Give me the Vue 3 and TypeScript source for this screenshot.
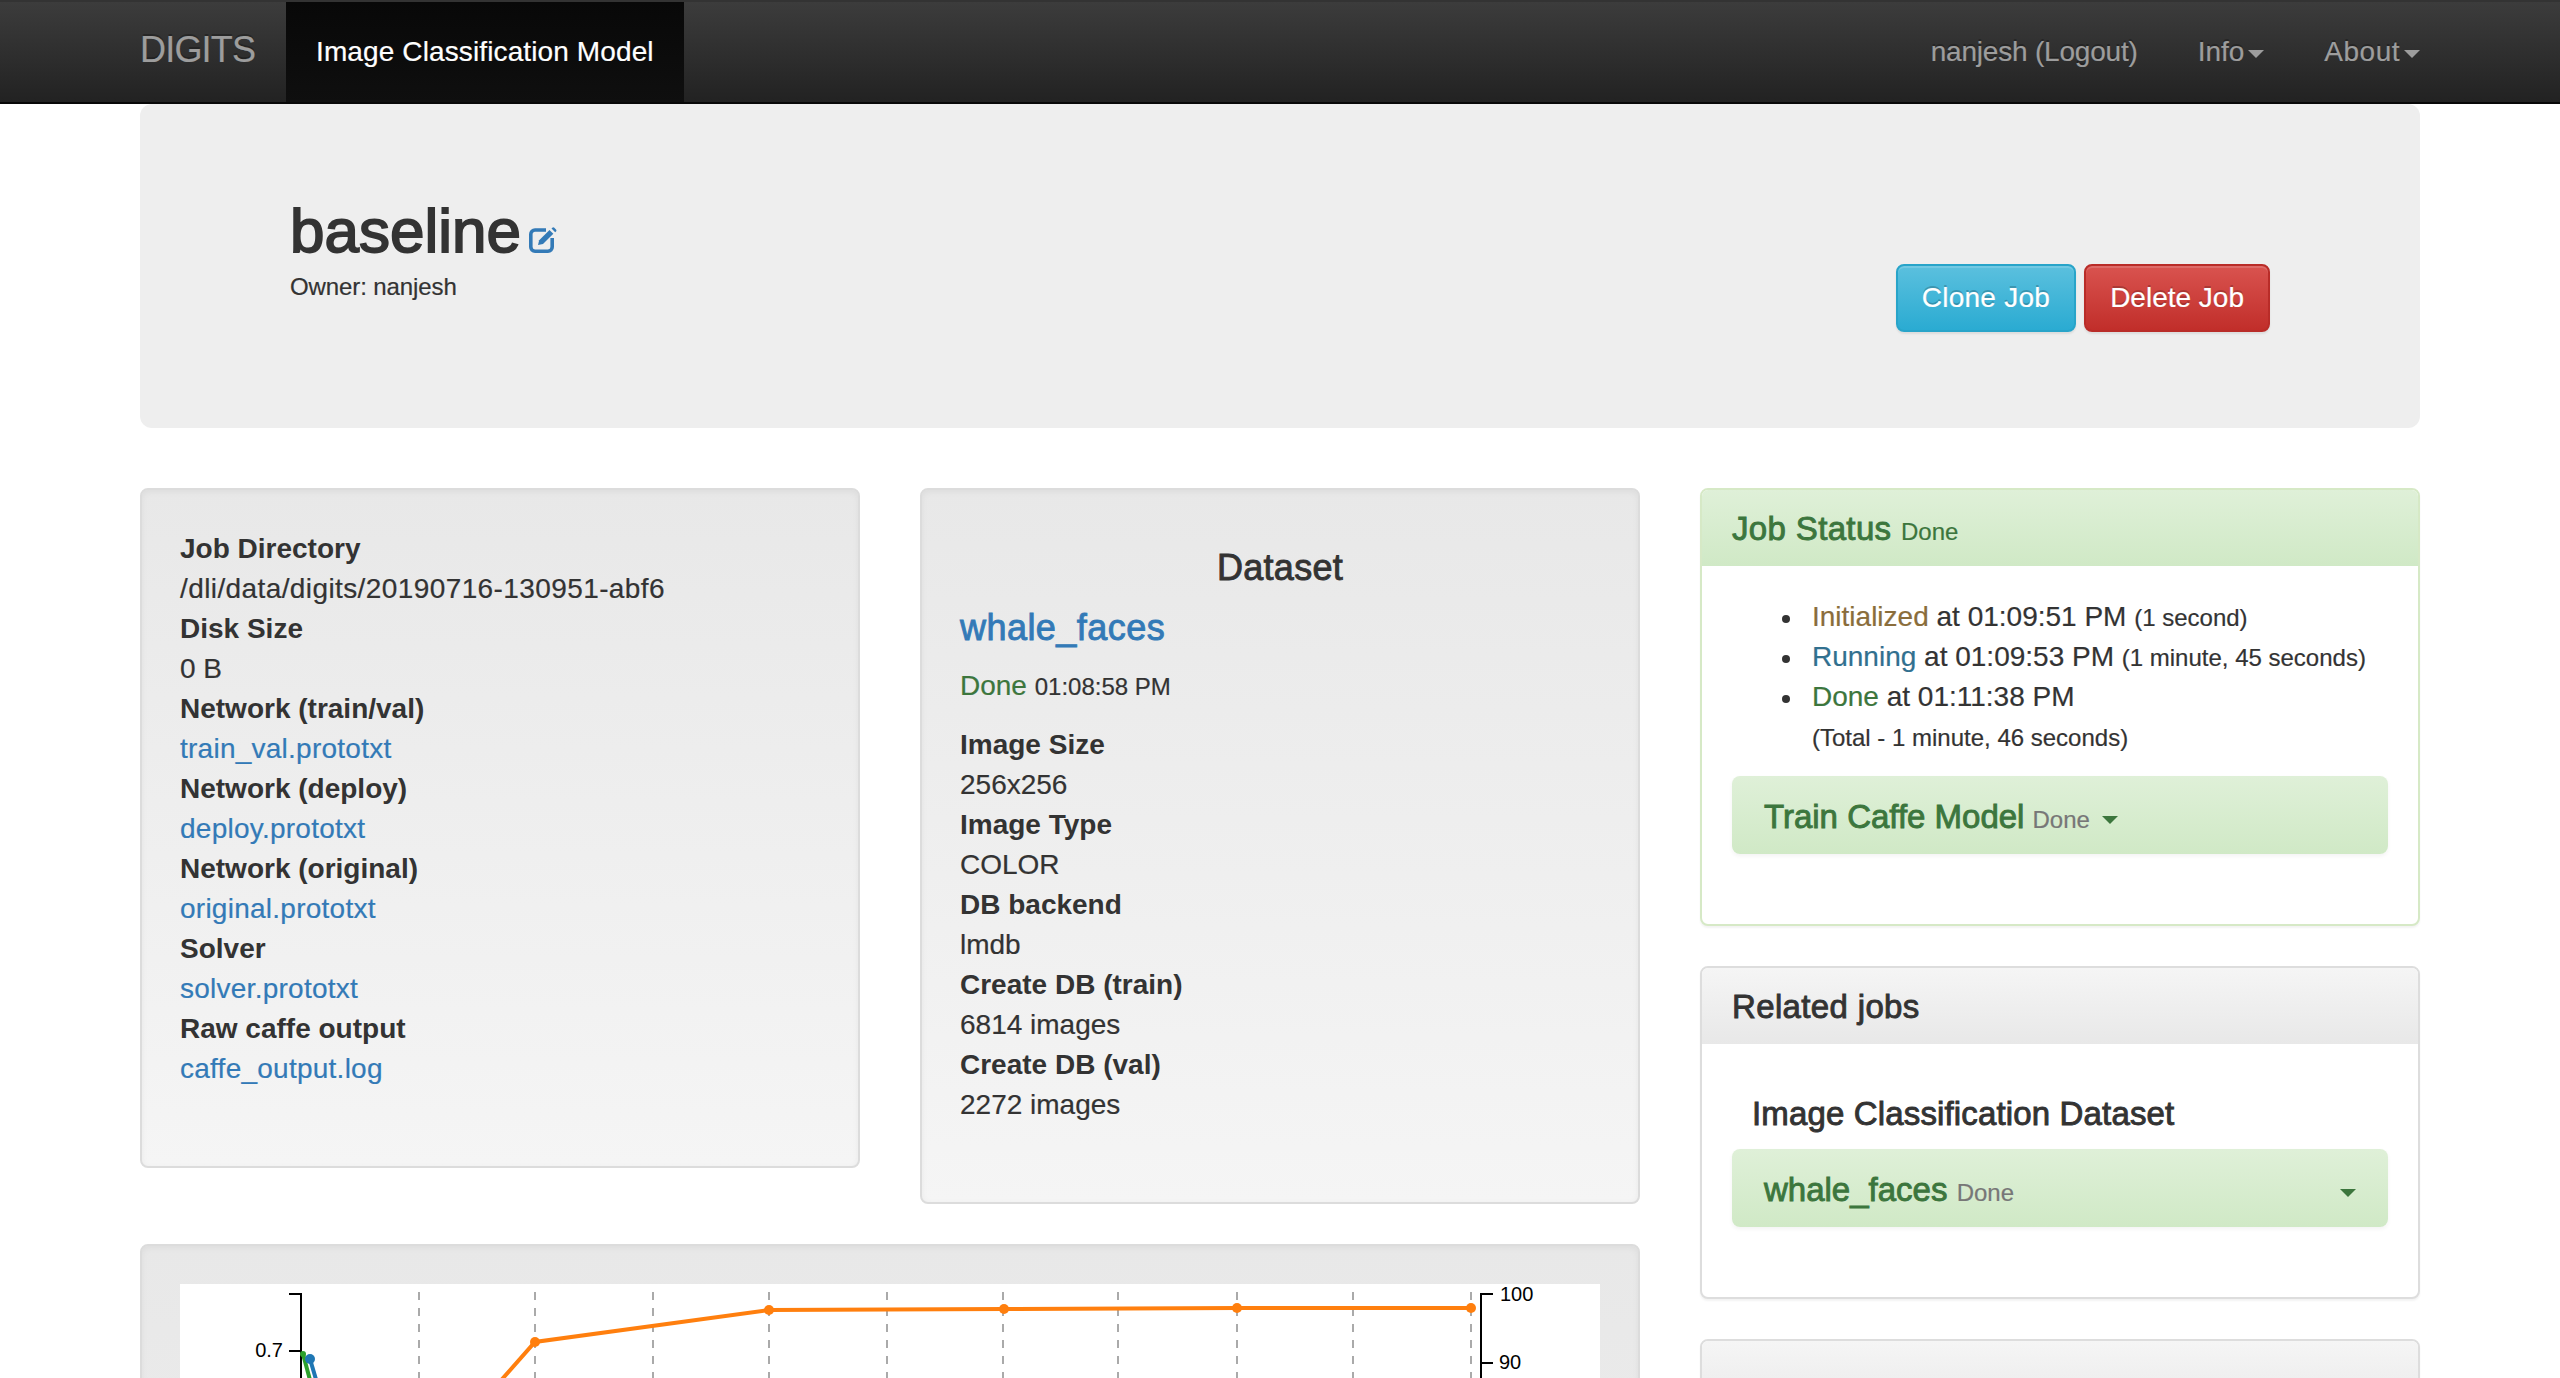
<script setup lang="ts">
interface Row { text: string; kind: 'label' | 'value' | 'link' | 'path' }

const jobRows: Row[] = [
  { text: 'Job Directory', kind: 'label' },
  { text: '/dli/data/digits/20190716-130951-abf6', kind: 'path' },
  { text: 'Disk Size', kind: 'label' },
  { text: '0 B', kind: 'value' },
  { text: 'Network (train/val)', kind: 'label' },
  { text: 'train_val.prototxt', kind: 'link' },
  { text: 'Network (deploy)', kind: 'label' },
  { text: 'deploy.prototxt', kind: 'link' },
  { text: 'Network (original)', kind: 'label' },
  { text: 'original.prototxt', kind: 'link' },
  { text: 'Solver', kind: 'label' },
  { text: 'solver.prototxt', kind: 'link' },
  { text: 'Raw caffe output', kind: 'label' },
  { text: 'caffe_output.log', kind: 'link' },
]

const datasetRows: Row[] = [
  { text: 'Image Size', kind: 'label' },
  { text: '256x256', kind: 'value' },
  { text: 'Image Type', kind: 'label' },
  { text: 'COLOR', kind: 'value' },
  { text: 'DB backend', kind: 'label' },
  { text: 'lmdb', kind: 'value' },
  { text: 'Create DB (train)', kind: 'label' },
  { text: '6814 images', kind: 'value' },
  { text: 'Create DB (val)', kind: 'label' },
  { text: '2272 images', kind: 'value' },
]

const statusRows = [
  { name: 'Initialized', cls: 'st-init', at: '01:09:51 PM', took: '(1 second)' },
  { name: 'Running', cls: 'st-run', at: '01:09:53 PM', took: '(1 minute, 45 seconds)' },
  { name: 'Done', cls: 'st-done', at: '01:11:38 PM', took: '' },
]

// chart coordinates are relative to the white box (page x-180, y-1284)
const gridX = [239, 355, 473, 589, 707, 823, 938, 1057, 1173, 1291]
const orange: [number, number][] = [[355, 58], [589, 26], [824, 25], [1057, 24], [1291, 24]]
const orangePath = 'M254 172 L355 58 L589 26 L824 25 L1057 24 L1291 24'
</script>

<template>
  <div class="page">
    <nav class="navbar">
      <div class="nav-inner">
        <a class="brand">DIGITS</a>
        <a class="nav-active">Image Classification Model</a>
        <div class="nav-right">
          <a class="nav-link user">nanjesh (Logout)</a>
          <a class="nav-link">Info<span class="nav-caret"></span></a>
          <a class="nav-link about">About<span class="nav-caret"></span></a>
        </div>
      </div>
    </nav>

    <div class="container">
      <header class="jumbotron">
        <div class="title-block">
          <h1 class="job-title">baseline<svg class="edit-icon" viewBox="0 0 28 26" width="28" height="26">
            <path d="M17 3H6a4.200 4.200 0 0 0-4.200 4.200V20a4.200 4.200 0 0 0 4.200 4.200h13a4.200 4.200 0 0 0 4.200-4.200V11" fill="none" stroke="#337ab7" stroke-width="3.600" />
            <path d="M9 18l1.200-4.800L20.500 3l3.800 3.800L14 17z" fill="#337ab7" />
            <path d="M22.500 1.500l.8-.8a1.500 1.500 0 0 1 2 0l1.700 1.700a1.500 1.500 0 0 1 0 2l-.8.800z" fill="#337ab7" />
          </svg></h1>
          <div class="owner">Owner: nanjesh</div>
        </div>
        <div class="actions">
          <button class="btn btn-info">Clone Job</button>
          <button class="btn btn-danger">Delete Job</button>
        </div>
      </header>

      <div class="main-grid">
        <div class="left-area">
          <div class="two-cols">
            <section class="well">
              <dl class="rows">
                <template v-for="row in jobRows" :key="row.text">
                  <dt v-if="row.kind === 'label'">{{ row.text }}</dt>
                  <dd v-else-if="row.kind === 'value'">{{ row.text }}</dd>
                  <dd v-else-if="row.kind === 'path'" class="path">{{ row.text }}</dd>
                  <dd v-else><a class="link">{{ row.text }}</a></dd>
                </template>
              </dl>
            </section>
            <section class="well">
              <h4 class="dataset-title medium">Dataset</h4>
              <h4 class="dataset-name medium"><a class="link-plain">whale_faces</a></h4>
              <div class="dataset-state"><span class="st-done">Done</span> <small>01:08:58 PM</small></div>
              <dl class="rows">
                <template v-for="row in datasetRows" :key="row.text">
                  <dt v-if="row.kind === 'label'">{{ row.text }}</dt>
                  <dd v-else>{{ row.text }}</dd>
                </template>
              </dl>
            </section>
          </div>

          <section class="well chart-well">
            <div class="chart-box">
              <svg class="chart" width="1420" height="560" viewBox="0 0 1420 560">
                <line v-for="x in gridX" :key="x" :x1="x" y1="8" :x2="x" y2="560" stroke="#aaa" stroke-width="2" stroke-dasharray="8 8" />
                <path d="M109 10H121V560" fill="none" stroke="#000" stroke-width="2" />
                <path d="M109 67H121" fill="none" stroke="#000" stroke-width="2" />
                <text x="103" y="73" text-anchor="end" class="tick">0.7</text>
                <path d="M1313 10H1301V560" fill="none" stroke="#000" stroke-width="2" />
                <path d="M1313 79H1301" fill="none" stroke="#000" stroke-width="2" />
                <text x="1320" y="17" class="tick">100</text>
                <text x="1319" y="85" class="tick">90</text>
                <path d="M123 70L150 170" fill="none" stroke="#2ca02c" stroke-width="4" />
                <path d="M130 75L158 170" fill="none" stroke="#1f77b4" stroke-width="4" />
                <circle cx="130" cy="75" r="5" fill="#1f77b4" />
                <circle cx="123" cy="70" r="3" fill="#2ca02c" />
                <path :d="orangePath" fill="none" stroke="#ff7f0e" stroke-width="4" />
                <circle v-for="(p, i) in orange" :key="i" :cx="p[0]" :cy="p[1]" r="5" fill="#ff7f0e" />
              </svg>
            </div>
          </section>
        </div>

        <aside class="right-col">
          <section class="panel panel-success">
            <div class="panel-heading medium">Job Status <small class="head-small">Done</small></div>
            <div class="panel-body">
              <ul class="status-list">
                <li v-for="s in statusRows" :key="s.name">
                  <span :class="s.cls">{{ s.name }}</span> at {{ s.at }} <small v-if="s.took">{{ s.took }}</small>
                </li>
                <li class="total"><small>(Total - 1 minute, 46 seconds)</small></li>
              </ul>
              <div class="job-box medium">
                <span>Train Caffe Model</span>
                <small class="box-small">Done</small>
                <span class="box-caret"></span>
              </div>
            </div>
          </section>

          <section class="panel panel-default">
            <div class="panel-heading medium">Related jobs</div>
            <div class="panel-body">
              <div class="related-title medium">Image Classification Dataset</div>
              <div class="job-box medium spread">
                <span>whale_faces <small class="box-small">Done</small></span>
                <span class="box-caret"></span>
              </div>
            </div>
          </section>

          <section class="panel panel-default">
            <div class="panel-heading empty"></div>
          </section>
        </aside>
      </div>
    </div>
  </div>
</template>

<style>
html, body {
  margin: 0;
  height: 100%;
  overflow: hidden;
  background: #fff;
}
</style>

<style scoped>
.page {
  font-family: "Liberation Sans", Arial, sans-serif;
  font-size: 28px;
  line-height: 40px;
  color: #333;
  height: 1378px;
  overflow: hidden;
  -webkit-text-stroke: 0.2px currentColor;
}
small {
  line-height: 1;
}
.medium {
  -webkit-text-stroke: 0.9px currentColor;
}
.navbar {
  height: 104px;
  box-sizing: border-box;
  border-top: 2px solid #333;
  border-bottom: 2px solid #080808;
  background: linear-gradient(to bottom, #3c3c3c 0, #222 100%);
}
.nav-inner {
  width: 2280px;
  margin: 0 auto;
  display: flex;
  height: 100px;
}
.brand {
  width: 146px;
  font-size: 36px;
  line-height: 96px;
  color: #9d9d9d;
  letter-spacing: -0.8px;
  text-shadow: 0 -2px 0 rgba(0, 0, 0, .25);
}
.nav-active {
  padding: 0 30px;
  line-height: 100px;
  letter-spacing: 0.12px;
  color: #fff;
  background: linear-gradient(to bottom, #080808 0, #0f0f0f 100%);
}
.nav-right {
  margin-left: auto;
  display: flex;
  gap: 60px;
  line-height: 100px;
}
.nav-link {
  color: #9d9d9d;
  text-shadow: 0 -2px 0 rgba(0, 0, 0, .25);
}
.nav-link.user {
  letter-spacing: -0.2px;
}
.nav-link.about {
  letter-spacing: 0.5px;
}
.nav-caret {
  display: inline-block;
  margin-left: 4px;
  vertical-align: middle;
  border-top: 8px solid #9d9d9d;
  border-left: 8px solid transparent;
  border-right: 8px solid transparent;
}
.container {
  width: 2280px;
  margin: 0 auto;
}
.jumbotron {
  height: 324px;
  box-sizing: border-box;
  padding: 0 150px;
  margin-bottom: 60px;
  background: #eee;
  border-radius: 12px;
  display: flex;
  justify-content: space-between;
}
.title-block {
  padding-top: 94px;
}
.job-title {
  margin: 0;
  font-size: 62px;
  line-height: 66px;
  font-weight: 400;
  -webkit-text-stroke: 1.8px #333;
  display: flex;
  align-items: flex-end;
}
.edit-icon {
  margin: 0 0 11px 8px;
}
.owner {
  margin-top: 6px;
  font-size: 24px;
  line-height: 34px;
  letter-spacing: -0.1px;
}
.actions {
  padding-top: 160px;
  display: flex;
  align-items: flex-start;
  gap: 8px;
}
.btn {
  height: 68px;
  padding: 0 24px;
  border: 2px solid;
  border-radius: 8px;
  font: inherit;
  color: #fff;
  text-shadow: 0 -2px 0 rgba(0, 0, 0, .2);
  box-shadow: inset 0 2px 0 rgba(255, 255, 255, .15), 0 2px 2px rgba(0, 0, 0, .075);
}
.btn-info {
  letter-spacing: 0.25px;
  background: linear-gradient(to bottom, #5bc0de 0, #2aabd2 100%);
  border-color: #28a4c9;
}
.btn-danger {
  background: linear-gradient(to bottom, #d9534f 0, #c12e2a 100%);
  border-color: #b92c28;
}
.main-grid {
  display: grid;
  grid-template-columns: 1500px 720px;
  gap: 60px;
  align-items: start;
}
.two-cols {
  display: grid;
  grid-template-columns: 720px 720px;
  gap: 60px;
  align-items: start;
}
.well {
  padding: 38px;
  margin-bottom: 40px;
  border: 2px solid #dcdcdc;
  border-radius: 8px;
  background: linear-gradient(to bottom, #e8e8e8 0, #f5f5f5 100%);
  box-shadow: inset 0 2px 6px rgba(0, 0, 0, .05), 0 2px 0 rgba(255, 255, 255, .1);
}
.rows {
  margin: 0 0 39px;
  padding-top: 1px;
}
.rows dt {
  font-weight: 700;
  -webkit-text-stroke: 0;
}
.rows dd {
  margin: 0;
}
.path {
  letter-spacing: 0.4px;
}
.link {
  color: #337ab7;
  letter-spacing: 0.25px;
}
.link-plain {
  color: #337ab7;
}
.dataset-title {
  margin: 20px 0;
  font-size: 36px;
  line-height: 40px;
  font-weight: 400;
  letter-spacing: 0.3px;
  text-align: center;
}
.dataset-name {
  margin: 0 0 18px;
  font-size: 36px;
  line-height: 40px;
  font-weight: 400;
  letter-spacing: 0.45px;
}
.dataset-state {
  margin-bottom: 18px;
}
.dataset-state small {
  font-size: 24px;
}
.chart-well {
  height: 1000px;
}
.chart-box {
  width: 1420px;
  height: 920px;
  background: #fff;
}
.chart {
  display: block;
}
.tick {
  font-family: "Liberation Sans", Arial, sans-serif;
  font-size: 20px;
  fill: #000;
  -webkit-text-stroke: 0;
}
.panel {
  margin-bottom: 40px;
  border: 2px solid #ddd;
  border-radius: 8px;
  background: #fff;
  box-shadow: 0 2px 2px rgba(0, 0, 0, .05);
}
.panel-success {
  border-color: #d6e9c6;
}
.panel-heading {
  padding: 21px 30px 19px;
  font-size: 33px;
  line-height: 36px;
  height: 36px;
  letter-spacing: 0.35px;
  border-radius: 6px 6px 0 0;
  background: linear-gradient(to bottom, #f5f5f5 0, #e8e8e8 100%);
}
.panel-success .panel-heading {
  color: #3c763d;
  background: linear-gradient(to bottom, #dff0d8 0, #d0e9c6 100%);
}
.panel-heading.empty {
  height: 40px;
}
.head-small {
  font-size: 24px;
  letter-spacing: 0;
  -webkit-text-stroke: 0.2px currentColor;
}
.panel-body {
  padding: 30px;
}
.status-list {
  margin: 0 0 19px;
  padding: 1px 0 0 80px;
  list-style: none;
}
.status-list li {
  position: relative;
}
.status-list li::before {
  content: "";
  position: absolute;
  left: -30px;
  top: 18px;
  width: 8px;
  height: 8px;
  border-radius: 50%;
  background: #333;
}
.status-list li.total::before {
  display: none;
}
.status-list small {
  font-size: 24px;
}
.st-init { color: #8a6d3b; }
.st-run { color: #31708f; }
.st-done { color: #3c763d; }
.job-box {
  box-sizing: border-box;
  height: 78px;
  padding: 4px 32px 0 32px;
  margin-bottom: 40px;
  display: flex;
  align-items: baseline;
  gap: 8px;
  font-size: 33px;
  line-height: 74px;
  color: #3c763d;
  border-radius: 8px;
  background: linear-gradient(to bottom, #dff0d8 0, #d0e9c6 100%);
  box-shadow: 0 2px 4px rgba(0, 0, 0, .05);
}
.job-box.spread {
  justify-content: space-between;
}
.box-small {
  font-size: 24px;
  color: #777;
  -webkit-text-stroke: 0.2px currentColor;
}
.box-caret {
  align-self: center;
  margin: 6px 0 0 4px;
  border-top: 8px solid #3c763d;
  border-left: 8px solid transparent;
  border-right: 8px solid transparent;
}
.related-title {
  padding-left: 20px;
  margin: 20px 0 15px;
  font-size: 33px;
  line-height: 40px;
  letter-spacing: 0.15px;
}
</style>
